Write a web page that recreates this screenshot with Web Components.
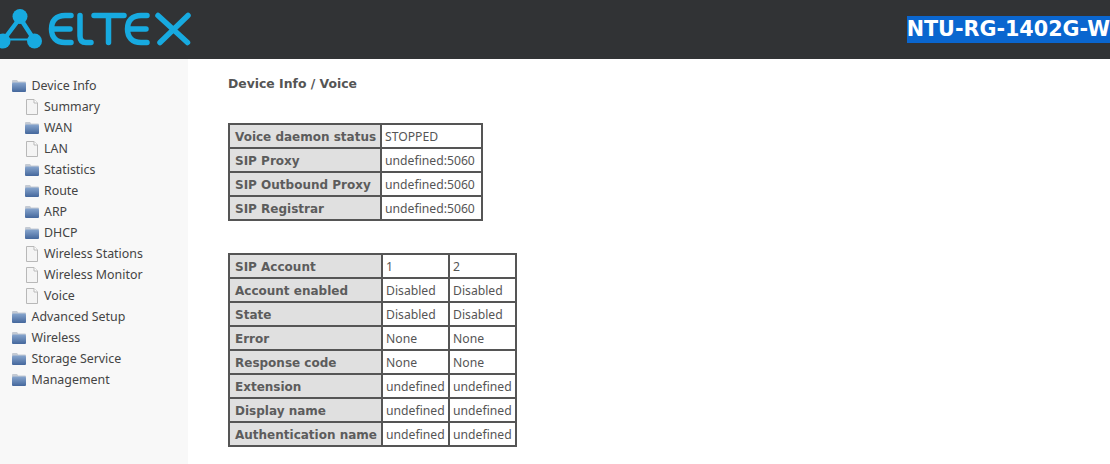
<!DOCTYPE html>
<html>
<head>
<meta charset="utf-8">
<style>
html, body { margin: 0; padding: 0; height: 100%; background: #fff; overflow: hidden; }
body { display: flex; flex-direction: column; }
</style>
</head>
<body>
<template id="tree-tpl">
  <style>
    :host { display: block; font: 12.4px "Noto Sans", "Liberation Sans", sans-serif; color: #444; }
    .row { display: flex; align-items: center; height: 21px; white-space: nowrap; }
    :host([child]) .row { padding-left: 13px; }
    svg { flex: none; width: 16px; height: 16px; margin-right: 4px; }
    :host(:not([child])) svg { margin-right: 4.500px; }
  </style>
  <div class="row"><span id="icon"></span><slot></slot></div>
</template>

<app-header label="NTU-RG-1402G-W"></app-header>
<main-area>
  <side-menu slot="menu">
    <tree-item icon="folder">Device Info</tree-item>
    <tree-item child icon="page">Summary</tree-item>
    <tree-item child icon="folder">WAN</tree-item>
    <tree-item child icon="page">LAN</tree-item>
    <tree-item child icon="folder">Statistics</tree-item>
    <tree-item child icon="folder">Route</tree-item>
    <tree-item child icon="folder">ARP</tree-item>
    <tree-item child icon="folder">DHCP</tree-item>
    <tree-item child icon="page">Wireless Stations</tree-item>
    <tree-item child icon="page">Wireless Monitor</tree-item>
    <tree-item child icon="page">Voice</tree-item>
    <tree-item icon="folder">Advanced Setup</tree-item>
    <tree-item icon="folder">Wireless</tree-item>
    <tree-item icon="folder">Storage Service</tree-item>
    <tree-item icon="folder">Management</tree-item>
  </side-menu>
  <voice-page>
    <info-table id="t1" first-width="152" widths="101" data='[["Voice daemon status","STOPPED"],["SIP Proxy","undefined:5060"],["SIP Outbound Proxy","undefined:5060"],["SIP Registrar","undefined:5060"]]'></info-table>
    <info-table id="t2" first-width="153" widths="67,67" data='[["SIP Account","1","2"],["Account enabled","Disabled","Disabled"],["State","Disabled","Disabled"],["Error","None","None"],["Response code","None","None"],["Extension","undefined","undefined"],["Display name","undefined","undefined"],["Authentication name","undefined","undefined"]]'></info-table>
  </voice-page>
</main-area>

<script>
const ICONS = {
  folder: `<svg viewBox="0 0 16 16"><path d="M1 4 V3 Q1 2 2 2 H6 L7.2 3.5 H14 Q15 3.5 15 4.5 V5 H1 Z" fill="#c4cad3"/><defs><linearGradient id="f" x1="0" y1="0" x2="0" y2="1"><stop offset="0" stop-color="#88a6ce"/><stop offset="1" stop-color="#44679c"/></linearGradient></defs><rect x="1" y="4.5" width="14" height="9.5" rx="1" fill="url(#f)"/></svg>`,
  page: `<svg viewBox="0 0 16 16"><path d="M2.5 .5 H10 L13.5 4 V15.5 H2.5 Z" fill="#f4f4f4" stroke="#b8b8b8"/><path d="M10 .5 V4 H13.5" fill="#fff" stroke="#b8b8b8"/></svg>`
};

class AppHeader extends HTMLElement {
  constructor() {
    super();
    this.attachShadow({mode:'open'});
  }
  connectedCallback() {
    this.shadowRoot.innerHTML = `
      <style>
        :host { display: flex; flex: none; height: 59px; background: #313335; align-items: center; justify-content: space-between; overflow: hidden; }
        svg { display: block; width: 200px; height: 59px; flex: none; }
        h1 { margin: 0; font: bold 20.7px/27px "DejaVu Sans", Verdana, sans-serif; color: #fff; background: #0a66cf; white-space: nowrap; }
      </style>
      <svg viewBox="0 0 200 59" role="img" aria-label="ELTEX logo">
        <g fill="#17aae0"><circle cx="20" cy="16.5" r="7.5"/><circle cx="3" cy="41" r="7.5"/><circle cx="34.500" cy="41" r="7.500"/></g>
        <path d="M20 18 L5 38 M20 18 L33 38" fill="none" stroke="#17aae0" stroke-width="4.500"/>
        <path d="M5 39.500 L33 39.500" fill="none" stroke="#17aae0" stroke-width="2"/>
        <g fill="none" stroke="#17aae0" stroke-width="5.500" stroke-linecap="round" stroke-linejoin="round">
          <path d="M71 15.500 H65 C56 15.500 51.500 21 51.500 29 C51.500 37 56 42.500 65 42.500 H71 M53 29 H70"/>
          <path d="M80 15.500 V36 C80 40.500 82 42.500 86 42.500 H91"/>
          <path d="M94 15.500 H124 M108.500 15.500 V42.500"/>
          <path d="M147 15.500 H141 C132 15.500 127.500 21 127.500 29 C127.500 37 132 42.500 141 42.500 H147 M129 29 H146"/>
          <path d="M158 15.500 L187.500 42.500 M188 15.500 L160 42.500"/>
        </g>
      </svg>
      <h1>${this.getAttribute('label')}</h1>
    `;
  }
}
customElements.define('app-header', AppHeader);

class MainArea extends HTMLElement {
  constructor() {
    super();
    this.attachShadow({mode:'open'});
    this.shadowRoot.innerHTML = `
      <style>
        :host { display: flex; flex: 1; min-height: 0; }
      </style>
      <slot name="menu"></slot><slot></slot>
    `;
  }
}
customElements.define('main-area', MainArea);

class SideMenu extends HTMLElement {
  constructor() {
    super();
    this.attachShadow({mode:'open'});
    this.shadowRoot.innerHTML = `
      <style>
        :host { display: block; flex: none; width: 188px; box-sizing: border-box; padding: 16px 0 0 11px; background: #f8f8f8; }
      </style>
      <slot></slot>
    `;
  }
}
customElements.define('side-menu', SideMenu);

class TreeItem extends HTMLElement {
  constructor() {
    super();
    this.attachShadow({mode:'open'}).appendChild(document.getElementById('tree-tpl').content.cloneNode(true));
  }
  connectedCallback() {
    this.shadowRoot.querySelector('#icon').outerHTML = ICONS[this.getAttribute('icon')];
  }
}
customElements.define('tree-item', TreeItem);

class VoicePage extends HTMLElement {
  constructor() {
    super();
    this.attachShadow({mode:'open'});
    this.shadowRoot.innerHTML = `
      <style>
        :host { display: flex; flex-direction: column; flex: 1; padding: 17px 0 0 40px; color: #555; }
        h2 { margin: 0 0 31px; font: bold 12.4px/16px "DejaVu Sans", Verdana, sans-serif; color: #555; }
        ::slotted(info-table) { margin-bottom: 32px; }
      </style>
      <h2>Device Info / Voice</h2>
      <slot></slot>
    `;
  }
}
customElements.define('voice-page', VoicePage);

class InfoTable extends HTMLElement {
  constructor() {
    super();
    this.attachShadow({mode:'open'});
  }
  connectedCallback() {
    const rows = JSON.parse(this.getAttribute('data'));
    const widths = this.getAttribute('widths').split(',');
    const first = this.getAttribute('first-width');
    const cols = `<col style="width:${first}px">` + widths.map(w => `<col style="width:${w}px">`).join('');
    const body = rows.map(r => '<tr><th>' + r[0] + '</th>' + r.slice(1).map(c => '<td>' + c + '</td>').join('') + '</tr>').join('');
    this.shadowRoot.innerHTML = `
      <style>
        :host { display: block; }
        table { border-collapse: collapse; table-layout: fixed; border: 2px solid #555; width: max-content; }
        th, td { border: 2px solid #555; height: 24px; padding: 0 0 0 3px; box-sizing: border-box; text-align: left; white-space: nowrap; }
        th { background: #e0e0e0; padding: 2px 0 0 5px; font: bold 12px "DejaVu Sans", Verdana, sans-serif; color: #5c5c5c; }
        td { background: #fff; font: 12.2px "Noto Sans", "Liberation Sans", sans-serif; color: #555; }
      </style>
      <table><colgroup>${cols}</colgroup>${body}</table>
    `;
  }
}
customElements.define('info-table', InfoTable);
</script>
</body>
</html>
